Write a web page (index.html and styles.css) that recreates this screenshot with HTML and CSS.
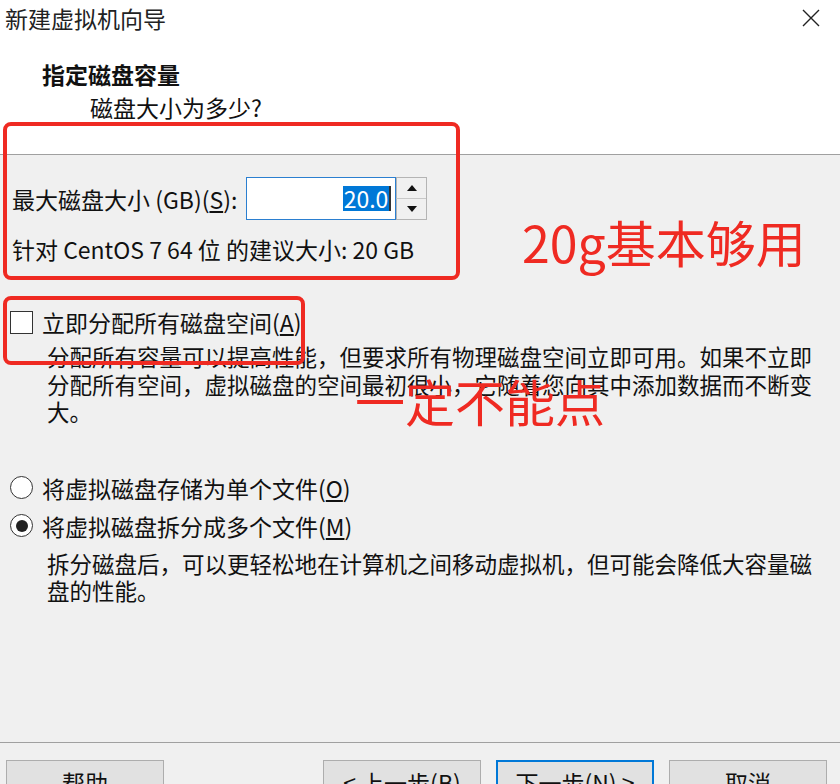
FILE: index.html
```html
<!DOCTYPE html>
<html lang="zh-CN">
  <head>
    <meta charset="UTF-8">
    <title>新建虚拟机向导</title>
    <link rel="stylesheet" href="styles.css">
  </head>
  <body>
    <div class="dialog">
      <div class="header">
        <div class="titlebar">
          <span class="title">新建虚拟机向导</span>
          <svg class="close" width="18" height="18" viewBox="0 0 18 18">
            <path d="M1 1 L17 17 M17 1 L1 17" stroke="#222" stroke-width="1.4" fill="none"/>
          </svg>
        </div>
        <div class="heading">
          <h1>指定磁盘容量</h1>
          <p>磁盘大小为多少?</p>
        </div>
      </div>

      <div class="content">
        <div class="size-row">
          <span class="label">最大磁盘大小 (GB)(<u>S</u>):</span>
          <div class="spin">
            <div class="spin-input"><span class="sel">20.0</span></div>
            <div class="spin-btns">
              <div class="spin-btn">
                <svg width="10" height="6" viewBox="0 0 10 6"><path d="M0 6 L5 0 L10 6 Z" fill="#111"/></svg>
              </div>
              <div class="spin-btn">
                <svg width="10" height="6" viewBox="0 0 10 6"><path d="M0 0 L10 0 L5 6 Z" fill="#111"/></svg>
              </div>
            </div>
          </div>
        </div>
        <p class="hint">针对 CentOS 7 64 位 的建议大小: 20 GB</p>

        <div class="option check-row">
          <span class="checkbox"></span>
          <span>立即分配所有磁盘空间(<u>A</u>)</span>
        </div>
        <p class="desc">分配所有容量可以提高性能，但要求所有物理磁盘空间立即可用。如果不立即<br>分配所有空间，虚拟磁盘的空间最初很小，它随着您向其中添加数据而不断变<br>大。</p>

        <div class="option radio-row first">
          <span class="radio"></span>
          <span>将虚拟磁盘存储为单个文件(<u>O</u>)</span>
        </div>
        <div class="option radio-row">
          <span class="radio checked"></span>
          <span>将虚拟磁盘拆分成多个文件(<u>M</u>)</span>
        </div>
        <p class="desc desc-split">拆分磁盘后，可以更轻松地在计算机之间移动虚拟机，但可能会降低大容量磁<br>盘的性能。</p>
      </div>

      <div class="footer">
        <button class="btn">帮助</button>
        <div class="btn-group">
          <button class="btn">&lt; 上一步(<u>B</u>)</button>
          <button class="btn primary">下一步(<u>N</u>) &gt;</button>
          <button class="btn">取消</button>
        </div>
      </div>

      <!-- red marks drawn over the screenshot -->
      <div class="mark box-size"></div>
      <div class="mark box-check"></div>
      <div class="note note-size">20g基本够用</div>
      <div class="note note-check">一定不能点</div>
    </div>
  </body>
</html>
```

FILE: styles.css
```css
* {
  box-sizing: border-box;
  margin: 0;
  padding: 0;
}

html, body {
  height: 100%;
  overflow: hidden;
}

body {
  background-color: #f0f0f0;
  color: #111;
  font-family: "Noto Sans CJK SC", "Noto Sans", sans-serif;
  font-size: 23px;
}

.dialog {
  position: relative;
  height: 784px;
  display: flex;
  flex-direction: column;
  overflow: hidden;
}

.header {
  background-color: #fff;
  height: 155px;
  border-bottom: 1px solid #a0a0a0;
  flex: none;
}

.titlebar {
  height: 36px;
  display: flex;
  align-items: center;
  justify-content: space-between;
  padding: 0 20px 0 5px;
}

.title {
  color: #222;
  line-height: 36px;
}

.heading {
  padding: 23px 0 0 42px;
}

.heading h1 {
  font-size: 23px;
  font-weight: bold;
  line-height: 30px;
}

.heading p {
  margin-top: 3px;
  padding-left: 48px;
  line-height: 30px;
}

.content {
  flex: 1;
  padding: 22px 0 0 12px;
}

.size-row {
  display: flex;
  align-items: center;
  height: 43px;
  gap: 9px;
}

.spin {
  display: flex;
  height: 43px;
}

.spin-input {
  width: 150px;
  height: 43px;
  background-color: #fff;
  border: 1px solid #2b7fd0;
  display: flex;
  align-items: center;
  justify-content: flex-end;
  padding-right: 4px;
}

.sel {
  background-color: #0078d7;
  color: #fff;
  line-height: 25px;
  padding: 0 1px;
  border-right: 2px solid #333;
}

.spin-btns {
  width: 31px;
  display: flex;
  flex-direction: column;
  border: 1px solid #b4b4b4;
  border-left: none;
}

.spin-btn {
  flex: 1;
  display: flex;
  align-items: center;
  justify-content: center;
  background-color: #f0f0f0;
  border-left: 1px solid #b4b4b4;
}

.spin-btn + .spin-btn {
  border-top: 1px solid #c8c8c8;
}

.hint {
  margin-top: 14px;
  line-height: 30px;
}

.option {
  display: flex;
  align-items: center;
  gap: 9px;
  height: 30px;
  margin-left: -2px;
}

.check-row {
  margin-top: 43px;
}

.checkbox {
  width: 23px;
  height: 23px;
  background-color: #fff;
  border: 1px solid #333;
}

.desc {
  margin: 6px 0 0 35px;
  font-size: 22.5px;
  line-height: 27.5px;
  white-space: nowrap;
}

.radio-row.first {
  margin-top: 47px;
}

.radio-row + .radio-row {
  margin-top: 8px;
}

.radio {
  width: 23px;
  height: 23px;
  border-radius: 50%;
  background-color: #fff;
  border: 1px solid #333;
  display: flex;
  align-items: center;
  justify-content: center;
}

.radio.checked::after {
  content: "";
  width: 12px;
  height: 12px;
  border-radius: 50%;
  background-color: #222;
}

.desc-split {
  margin-top: 9px;
}

.footer {
  flex: none;
  height: 42px;
  border-top: 1px solid #a0a0a0;
  padding: 17px 13px 0 6px;
  display: flex;
  justify-content: space-between;
  align-items: flex-start;
}

.btn-group {
  display: flex;
  gap: 15px;
}

.btn {
  flex: none;
  width: 158px;
  height: 44px;
  background-color: #e1e1e1;
  border: 1px solid #adadad;
  font-family: inherit;
  font-size: 23px;
  color: #111;
}

.btn.primary {
  border: 2px solid #0078d7;
}

.mark {
  position: absolute;
  border: 4px solid #ef2a22;
  border-radius: 8px;
}

.box-size {
  left: 3px;
  top: 122px;
  width: 457px;
  height: 158px;
}

.box-check {
  left: 3px;
  top: 296px;
  width: 302px;
  height: 69px;
}

.note {
  position: absolute;
  color: #ef2a22;
  font-size: 50px;
  line-height: 60px;
  white-space: nowrap;
}

.note-size {
  left: 522px;
  top: 211px;
}

.note-check {
  left: 355px;
  top: 370px;
}
```
